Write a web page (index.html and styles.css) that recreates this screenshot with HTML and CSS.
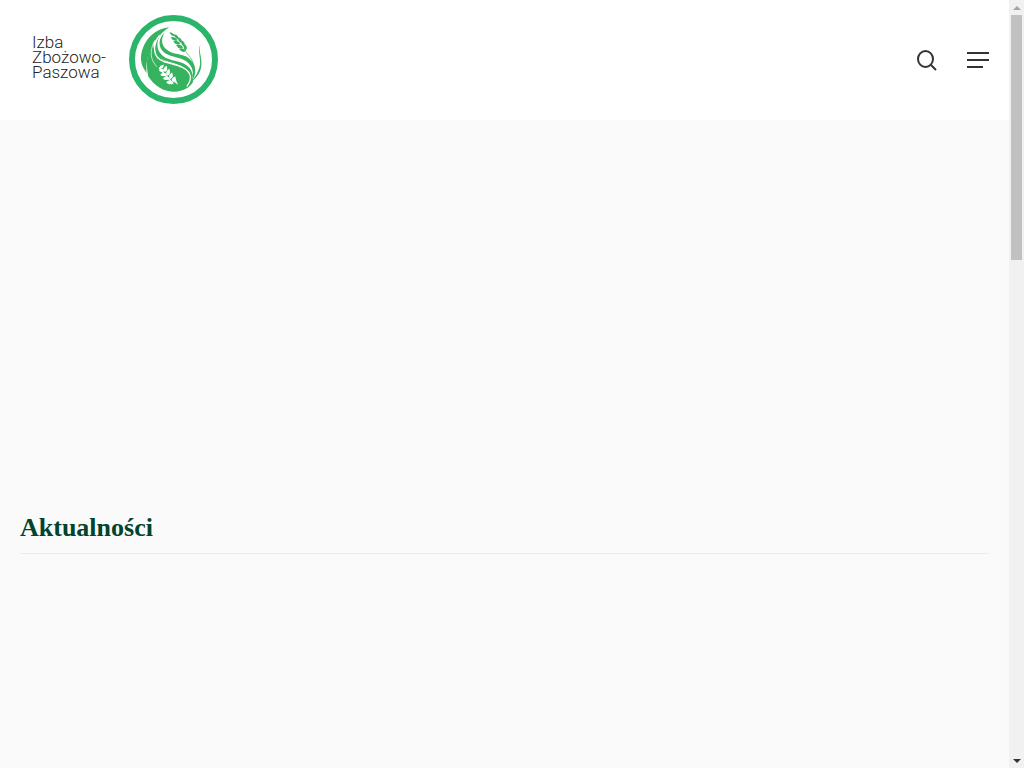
FILE: index.html
```html
<!DOCTYPE html>
<html lang="pl">
<head>
  <meta charset="UTF-8">
  <meta name="viewport" content="width=device-width, initial-scale=1.0">
  <title>Izba Zbożowo-Paszowa</title>
  <link rel="stylesheet" href="styles.css">
</head>
<body>
  <div class="page">
    <header class="header">
      <a href="#" class="logo">
        <span class="logo-text">Izba<br>Zbożowo-<br>Paszowa</span>
        <svg class="logo-mark" viewBox="26 20 268 268" aria-hidden="true">
          <circle cx="160" cy="154" r="125" fill="none" stroke="#2ab56b" stroke-width="18"/>
          <!-- leaves -->
          <g fill="#37b360">
            <path d="M147 57C96 62 62 106 62 154C63 171 71 183 79 195C77 158 82 101 147 57Z"/>
            <path d="M98 102C76 136 78 175 84 205C104 236 133 251 162 251C190 250 209 239 219 221C215 194 194 178 165 170C128 160 100 142 98 102Z"/>
            <path d="M125 73C95 103 98 139 126 153C153 166 190 167 207 192C214 205 212 218 205 230C225 208 218 184 199 171C174 154 137 161 119 134C106 114 112 91 125 73Z"/>
            <path d="M134 71C111 94 114 120 135 135C158 150 187 145 206 166C222 184 222 204 211 224C234 198 228 167 207 151C185 134 160 142 140 125C122 110 122 91 134 71Z"/>
            <path d="M241 109C229 132 250 161 234 189C229 202 219 214 212 222C234 206 245 188 244 162C243 139 236 131 241 109Z"/>
          </g>
          <path d="M118 81C91 119 103 150 130 160C166 171 203 175 211 204C212 214 207 226 200 235" fill="none" stroke="#fff" stroke-width="4"/>
          <path d="M104 96C85 132 92 156 110 176" fill="none" stroke="#fff" stroke-width="2"/>
          <path d="M196 130Q221 156 222 178Q222 197 213 212" fill="none" stroke="#37b360" stroke-width="2"/>
          <!-- upper ear -->
          <g fill="#37b360">
            <path d="M148 72Q159 73 166 84Q153 85 148 72Z"/>
            <path d="M162 78Q176 80 175 94Q164 91 162 78Z"/>
            <path d="M151 88Q163 83 173 96Q160 102 151 88Z"/>
            <path d="M173 87Q188 90 184 104Q174 101 173 87Z"/>
            <path d="M159 100Q171 93 181 106Q169 114 159 100Z"/>
            <path d="M183 96Q198 101 192 116Q183 111 183 96Z"/>
            <path d="M168 111Q180 104 189 117Q177 127 168 111Z"/>
            <path d="M193 107Q206 115 196 129Q188 121 193 107Z"/>
            <path d="M177 123Q188 115 197 129Q187 136 177 123Z"/>
          </g>
          <!-- lower ear -->
          <g fill="#fff">
            <path d="M131 169Q116 172 117 182Q130 184 131 169Z"/>
            <path d="M116 187Q126 176 134 189Q124 196 116 187Z"/>
            <path d="M139 173Q124 182 134 192Q145 187 139 173Z"/>
            <path d="M120 200Q132 187 141 201Q130 209 120 200Z"/>
            <path d="M147 182Q132 192 142 203Q154 198 147 182Z"/>
            <path d="M128 212Q139 198 149 212Q138 220 128 212Z"/>
            <path d="M156 193Q141 201 150 213Q162 208 156 193Z"/>
            <path d="M138 223Q149 209 157 229Q149 226 147 229Z"/>
            <path d="M166 205Q151 209 156 220Q165 220 174 231Q166 214 166 205Z"/>
            <path d="M118 179L161 226L157 228L115 181Z"/>
          </g>
        </svg>
      </a>
      <div class="header-buttons">
        <button type="button" class="icon-button" aria-label="Szukaj">
          <svg class="icon-search" viewBox="0 0 22 22" aria-hidden="true">
            <ellipse cx="9.5" cy="10" rx="7.5" ry="8"/>
            <path d="M15 16L20 21"/>
          </svg>
        </button>
        <button type="button" class="icon-button" aria-label="Menu">
          <svg class="icon-menu" viewBox="0 0 22 16" aria-hidden="true">
            <path d="M0 1H22M0 8H22M0 15H16"/>
          </svg>
        </button>
      </div>
    </header>
    <main class="content">
      <h2 class="section-title">Aktualności</h2>
    </main>
  </div>

  <div class="scrollbar">
    <button type="button" class="scroll-button" aria-label="W górę">
      <svg class="arrow arrow-up" viewBox="0 0 8 4" aria-hidden="true"><path d="M0 4L4 0L8 4Z"/></svg>
    </button>
    <div class="scroll-track">
      <div class="scroll-thumb"></div>
    </div>
    <button type="button" class="scroll-button" aria-label="W dół">
      <svg class="arrow" viewBox="0 0 8 4" aria-hidden="true"><path d="M0 0L4 4L8 0Z"/></svg>
    </button>
  </div>
</body>
</html>
```
FILE: styles.css
```css
* {
  box-sizing: border-box;
}

body {
  margin: 0;
  display: grid;
  grid-template-columns: 1fr 15px;
  min-height: 100vh;
  background-color: #fafafa;
  font-family: "Liberation Serif", serif;
}

.page {
  display: flex;
  flex-direction: column;
}

.header {
  display: flex;
  justify-content: space-between;
  align-items: center;
  padding: 15px 20px 16px 32px;
  background-color: #fff;
}

.logo {
  display: flex;
  align-items: center;
  gap: 23px;
  color: #222;
  text-decoration: none;
}

.logo-text {
  padding-bottom: 4px;
  font-family: Roboto, "Liberation Sans", sans-serif;
  font-size: 17px;
  font-weight: 300;
  line-height: 15px;
}

.logo-mark {
  width: 89px;
  height: 89px;
}

.header-buttons {
  display: flex;
  align-items: center;
  gap: 29px;
}

.icon-button {
  display: flex;
  padding: 0;
  border: none;
  background: none;
  cursor: pointer;
}

.icon-button svg {
  fill: none;
  stroke: #333;
  stroke-width: 2;
}

.icon-search {
  width: 22px;
  height: 22px;
}

.icon-menu {
  width: 22px;
  height: 16px;
}

.content {
  padding: 393px 20px 0;
}

.section-title {
  margin: 0;
  padding-bottom: 10px;
  border-bottom: 1px solid #ececec;
  color: #00432f;
  font-size: 26px;
  line-height: 30px;
}

.scrollbar {
  display: flex;
  flex-direction: column;
  background-color: #f1f1f1;
}

.scroll-button {
  display: flex;
  justify-content: center;
  align-items: center;
  height: 15px;
  padding: 0;
  border: none;
  background: none;
}

.arrow {
  width: 8px;
  height: 4px;
  fill: #333;
}

.arrow-up {
  fill: #a3a3a3;
}

.scroll-track {
  flex: 1;
  display: flex;
  padding: 0 2px;
}

.scroll-thumb {
  width: 100%;
  height: 33.2%;
  background-color: #c1c1c1;
}
```
